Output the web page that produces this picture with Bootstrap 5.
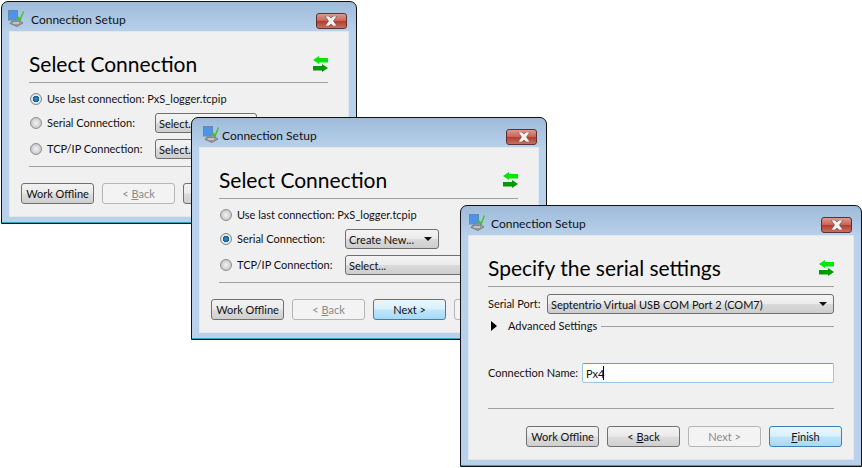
<!DOCTYPE html>
<html lang="en">
<head>
  <meta charset="UTF-8" />
  <title>Connection Setup</title>
  <link href="https://cdn.jsdelivr.net/npm/bootstrap@5.3.3/dist/css/bootstrap.min.css" rel="stylesheet" />
  <style>
    body {
      font-family: "Lato", "Open Sans", sans-serif;
      font-size: 11px;
      color: #111;
      background-color: #fff;
      overflow: hidden;
    }

    .desk {
      position: relative;
      width: 862px;
      height: 468px;
    }

    .win {
      position: absolute;
      display: flex;
      flex-direction: column;
      border: 1px solid #111;
      border-radius: 7px 7px 0 0;
      padding: 0 7px 6px;
      background: linear-gradient(#9dbbda, #b9d1ea 30px);
      box-shadow: inset 0 -1px 0 #2fa6b8;
    }

    .win-one { left: 1px; top: 1px; width: 356px; height: 223px; }
    .win-two { left: 191px; top: 117px; width: 356px; height: 223px; }
    .win-three { left: 460px; top: 205px; width: 402px; height: 262px; }

    .titlebar {
      height: 29px;
      flex: none;
      font-size: 12px;
      padding-top: 8px;
    }

    .titlebar svg { flex: none; }

    .title-text {
      flex-grow: 1;
      line-height: 20px;
    }

    .win-one .titlebar svg:first-child { margin-left: -1px; }
    .win-one .title-text { margin-left: 6px; }
    .win-two .titlebar svg:first-child { margin-left: 4px; }
    .win-two .title-text { margin-left: 2px; }
    .win-three .titlebar svg:first-child { margin-left: 1px; }
    .win-three .title-text { margin-left: 5px; }

    .close-btn {
      width: 31px;
      height: 16px;
      margin: 3px 2px 0 0;
      border: 1px solid #5e2f33;
      border-radius: 3px;
      background: linear-gradient(#dc9a8e, #c9645a 48%, #b13d2f 52%, #c8705f);
    }

    .pane {
      flex: 1;
      min-height: 0;
      background-color: #f0f0f0;
      padding: 0 19px;
      border: 1px solid #dfe7ef;
    }

    .win-one .pane, .win-two .pane { padding-right: 20px; }

    .head-row { height: 50px; padding-top: 14px; }

    .head-text {
      font-size: 21px;
      line-height: 30px;
      color: #000;
    }

    .rule {
      margin: 0;
      opacity: 1;
      border-top: 1px solid #a0a0a0;
    }

    .rows { padding-top: 6px; }

    .opt-row { height: 20px; padding-left: 1px; white-space: nowrap; }
    .opt-row + .opt-row { margin-top: 4px; }
    .opt-row + .opt-row + .opt-row { margin-top: 6px; }

    .opt-row .form-check-input {
      width: 12px;
      height: 12px;
      margin: 0 5px 0 0;
      flex: none;
      border: 1px solid #8f8f8f;
      background-image: radial-gradient(circle, #f4f4f4, #c9c9c9 70%);
      box-shadow: none;
    }

    .opt-row .form-check-input:checked {
      background-color: #d8d8d8;
      border-color: #7d8a96;
      background-image: radial-gradient(circle, #3a9ad6 0, #0f5c91 42%, #e9e9e9 50%, #cfcfcf 100%);
    }

    .opt-label { width: 108px; flex: none; }

    .pick {
      flex: none;
      height: 20px;
      padding: 0 6px 0 3px;
      font-size: 11px;
      line-height: 17px;
      color: #111;
      white-space: nowrap;
      border: 1px solid #6f6f6f;
      border-radius: 3px;
      background: linear-gradient(#f4f4f4, #ebebeb 48%, #dadada 52%, #cdcdcd);
    }

    .pick.dropdown-toggle::after {
      border-top: 4px solid #111;
      border-right: 4px solid transparent;
      border-left: 4px solid transparent;
      border-bottom: 0;
      margin-left: 0;
    }

    .pick-new { width: 94px; }
    .pick-blank { width: 102px; }
    .pick-long { width: 287px; }
    .pick-wide { width: 140px; }

    .rule-mid { margin-top: 7px; }
    .foot-row { padding-top: 16px; gap: 8px; margin-left: -8px; }

    .wbtn {
      flex: none;
      width: 73px;
      height: 21px;
      padding: 0;
      font-size: 11px;
      line-height: 18px;
      color: #111;
      border: 1px solid #707070;
      border-radius: 3px;
      background: linear-gradient(#f2f2f2, #ebebeb 48%, #dddddd 52%, #cfcfcf);
    }

    .wbtn:disabled {
      color: #8a8a8a;
      opacity: 1;
      border-color: #b5b5b5;
      background: #f3f3f3;
    }

    .wbtn-active {
      border-color: #3c7fb1;
      background: linear-gradient(#eaf6fd, #d9f0fc 48%, #bee6fd 52%, #a7d9f5);
    }

    .port-row { height: 20px; margin-top: 7px; }
    .port-label { width: 59px; flex: none; }

    .adv-row { height: 24px; }
    .adv-arrow {
      width: 0;
      height: 0;
      margin: 0 11px 0 3px;
      border-left: 6px solid #000;
      border-top: 5px solid transparent;
      border-bottom: 5px solid transparent;
    }

    .adv-row .rule { flex: 1; margin-left: 4px; }

    .name-row { height: 20px; margin-top: 25px; white-space: nowrap; }
    .name-label { width: 94px; flex: none; }
    .name-wrap { flex: 1; }

    .name-input {
      height: 20px;
      min-height: 0;
      padding: 0 0 0 3px;
      font-size: 11px;
      line-height: 18px;
      color: #111;
      border: 1px solid #9ec4e0;
      border-top-color: #5f9cc7;
      border-radius: 2px;
      background-color: #fff;
      box-shadow: none;
    }

    .name-caret {
      position: absolute;
      left: 21px;
      top: 3px;
      width: 1px;
      height: 14px;
      background-color: #000;
    }

    .rule-low { margin-top: 25px; }
    .foot-low { padding-top: 17px; margin-right: -8px; }
    .mnemonic { text-decoration: underline; }
  </style>
</head>
<body>
  <svg width="0" height="0" class="d-block">
    <symbol id="app-icon" viewBox="0 0 17 17">
      <rect x="0.5" y="0.5" width="9" height="9.5" fill="#4c94ea" stroke="#6a88ae" />
      <path d="M10 6l2 2 3-7 1 1-3.500 9h-1L8 8z" fill="#43c033" />
      <path d="M4 11h8l3 2-6 3.500-7-3z" fill="#9b9b9b" stroke="#5f5f5f" stroke-width=".6" />
      <path d="M5 13h6" stroke="#e8e8e8" />
    </symbol>
    <symbol id="swap-icon" viewBox="0 0 15 16">
      <path d="M0 4l6-4v2h9v4.500H6V8z" fill="#00e800" />
      <path d="M15 12L9 8v2H0v4.500h9V16z" fill="#009a00" />
    </symbol>
    <symbol id="close-icon" viewBox="0 0 14 10">
      <path d="M1 0h4l2 2 2-2h4L9.500 5 13 10H9L7 8 5 10H1l3.500-5z" fill="#f2f2f2" stroke="#6e4444" stroke-width=".6" />
    </symbol>
  </svg>

  <div class="desk">
    <div class="win win-one">
      <div class="titlebar d-flex align-items-start">
        <svg width="17" height="17"><use href="#app-icon" /></svg>
        <span class="title-text">Connection Setup</span>
        <span class="close-btn d-flex align-items-center justify-content-center"><svg width="14" height="10"><use href="#close-icon" /></svg></span>
      </div>
      <div class="pane">
        <div class="head-row d-flex justify-content-between align-items-center">
          <span class="head-text">Select Connection</span>
          <svg width="15" height="16"><use href="#swap-icon" /></svg>
        </div>
        <hr class="rule" />
        <div class="rows d-flex flex-column">
          <div class="opt-row d-flex align-items-center">
            <input class="form-check-input" type="radio" name="one" checked />
            <span>Use last connection: PxS_logger.tcpip</span>
          </div>
          <div class="opt-row d-flex align-items-center">
            <input class="form-check-input" type="radio" name="one" />
            <span class="opt-label">Serial Connection:</span>
            <button class="btn pick pick-blank text-start" type="button">Select...</button>
          </div>
          <div class="opt-row d-flex align-items-center">
            <input class="form-check-input" type="radio" name="one" />
            <span class="opt-label">TCP/IP Connection:</span>
            <button class="btn pick pick-blank text-start" type="button">Select...</button>
          </div>
        </div>
        <hr class="rule rule-mid" />
        <div class="foot-row d-flex">
          <button class="btn wbtn" type="button">Work Offline</button>
          <button class="btn wbtn" type="button" disabled>&lt; <span class="mnemonic">B</span>ack</button>
          <button class="btn wbtn" type="button">Next &gt;</button>
          <button class="btn wbtn" type="button" disabled>Finish</button>
        </div>
      </div>
    </div>

    <div class="win win-two">
      <div class="titlebar d-flex align-items-start">
        <svg width="17" height="17"><use href="#app-icon" /></svg>
        <span class="title-text">Connection Setup</span>
        <span class="close-btn d-flex align-items-center justify-content-center"><svg width="14" height="10"><use href="#close-icon" /></svg></span>
      </div>
      <div class="pane">
        <div class="head-row d-flex justify-content-between align-items-center">
          <span class="head-text">Select Connection</span>
          <svg width="15" height="16"><use href="#swap-icon" /></svg>
        </div>
        <hr class="rule" />
        <div class="rows d-flex flex-column">
          <div class="opt-row d-flex align-items-center">
            <input class="form-check-input" type="radio" name="two" />
            <span>Use last connection: PxS_logger.tcpip</span>
          </div>
          <div class="opt-row d-flex align-items-center">
            <input class="form-check-input" type="radio" name="two" checked />
            <span class="opt-label">Serial Connection:</span>
            <button class="btn pick pick-new dropdown-toggle d-flex align-items-center justify-content-between" type="button">Create New...</button>
          </div>
          <div class="opt-row d-flex align-items-center">
            <input class="form-check-input" type="radio" name="two" />
            <span class="opt-label">TCP/IP Connection:</span>
            <button class="btn pick pick-wide text-start" type="button">Select...</button>
          </div>
        </div>
        <hr class="rule rule-mid" />
        <div class="foot-row d-flex">
          <button class="btn wbtn" type="button">Work Offline</button>
          <button class="btn wbtn" type="button" disabled>&lt; <span class="mnemonic">B</span>ack</button>
          <button class="btn wbtn wbtn-active" type="button">Next &gt;</button>
          <button class="btn wbtn" type="button" disabled>Finish</button>
        </div>
      </div>
    </div>

    <div class="win win-three">
      <div class="titlebar d-flex align-items-start">
        <svg width="17" height="17"><use href="#app-icon" /></svg>
        <span class="title-text">Connection Setup</span>
        <span class="close-btn d-flex align-items-center justify-content-center"><svg width="14" height="10"><use href="#close-icon" /></svg></span>
      </div>
      <div class="pane">
        <div class="head-row d-flex justify-content-between align-items-center">
          <span class="head-text">Specify the serial settings</span>
          <svg width="15" height="16"><use href="#swap-icon" /></svg>
        </div>
        <hr class="rule" />
        <div class="port-row d-flex align-items-center">
          <span class="port-label">Serial Port:</span>
          <button class="btn pick pick-long dropdown-toggle d-flex align-items-center justify-content-between" type="button">Septentrio Virtual USB COM Port 2 (COM7)</button>
        </div>
        <div class="adv-row d-flex align-items-center">
          <span class="adv-arrow"></span>
          <span>Advanced Settings</span>
          <hr class="rule" />
        </div>
        <div class="name-row d-flex align-items-center">
          <span class="name-label">Connection Name:</span>
          <div class="name-wrap position-relative">
            <input class="form-control name-input" type="text" value="Px4" />
            <span class="name-caret"></span>
          </div>
        </div>
        <hr class="rule rule-low" />
        <div class="foot-low d-flex justify-content-end gap-2">
          <button class="btn wbtn" type="button">Work Offline</button>
          <button class="btn wbtn" type="button">&lt; <span class="mnemonic">B</span>ack</button>
          <button class="btn wbtn" type="button" disabled>Next &gt;</button>
          <button class="btn wbtn wbtn-active" type="button"><span class="mnemonic">F</span>inish</button>
        </div>
      </div>
    </div>
  </div>

  <script src="https://cdn.jsdelivr.net/npm/bootstrap@5.3.3/dist/js/bootstrap.bundle.min.js"></script>
</body>
</html>
